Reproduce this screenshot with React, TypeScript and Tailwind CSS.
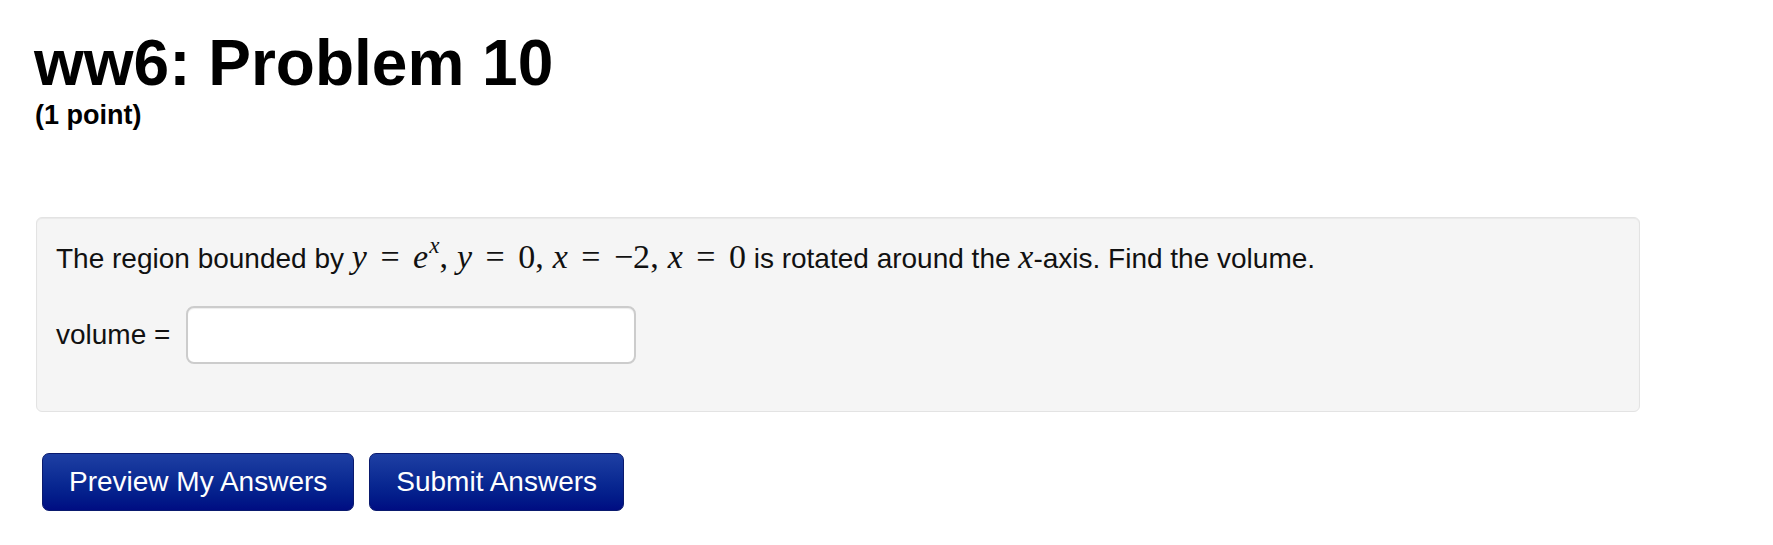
import React from "react";

const sans = { fontFamily: '"Liberation Sans", Arial, Helvetica, sans-serif' };
const serif = { fontFamily: '"Liberation Serif", "Times New Roman", serif' };

function MI({ children }: { children: React.ReactNode }) {
  return <span className="italic">{children}</span>;
}

function Eq() {
  return <span className="mx-[13.5px]">=</span>;
}

function Comma() {
  return <span className="mr-[9px]">,</span>;
}

function Math() {
  return (
    <span className="text-[34px] leading-none whitespace-nowrap" style={serif}>
      <MI>y</MI>
      <Eq />
      <MI>e</MI>
      <sup className="relative top-[-2px] text-[23px] italic leading-none align-[0.55em] ml-[1px]">
        x
      </sup>
      <Comma />
      <MI>y</MI>
      <Eq />
      0
      <Comma />
      <MI>x</MI>
      <Eq />
      −2
      <Comma />
      <MI>x</MI>
      <Eq />
      0
    </span>
  );
}

export default function App() {
  return (
    <div className="min-h-[545px] w-full bg-white text-black" style={sans}>
      <div className="pl-[34px] pt-[28px]">
        <h1 className="text-[64px] font-bold leading-[70px]">ww6: Problem 10</h1>
        <div className="text-[27px] font-bold leading-[28px] mt-[3px] ml-[1px]">
          (1 point)
        </div>
      </div>

      <div className="ml-[36px] mt-[88px] w-[1604px] rounded-[6px] border border-[#e3e3e3] bg-[#f5f5f5] pl-[19px] pr-[19px] pt-[18px] pb-[47px] shadow-[inset_0_1px_1px_rgba(0,0,0,0.05)]">
        <p className="text-[28px] leading-[40px] text-[#111]">
          The region bounded by <Math /> is rotated around the{" "}
          <span className="text-[34px] italic leading-none" style={serif}>
            x
          </span>
          -axis. Find the volume.
        </p>
        <div className="mt-[27px] flex items-center gap-[16px]">
          <span className="text-[28px] leading-[40px] text-[#111]">volume =</span>
          <input
            type="text"
            className="h-[58px] w-[450px] rounded-[8px] border-2 border-[#cccccc] bg-white px-3 text-[28px] outline-none shadow-[inset_0_1px_1px_rgba(0,0,0,0.075)]"
          />
        </div>
      </div>

      <div className="ml-[42px] mt-[41px] flex gap-[15px]">
        <button className="h-[58px] rounded-[7px] border border-[#0a1a6e] bg-gradient-to-b from-[#1e3fa3] to-[#000c82] px-[26px] text-[28px] leading-none text-white">
          Preview My Answers
        </button>
        <button className="h-[58px] rounded-[7px] border border-[#0a1a6e] bg-gradient-to-b from-[#1e3fa3] to-[#000c82] px-[26px] text-[28px] leading-none text-white">
          Submit Answers
        </button>
      </div>
    </div>
  );
}
